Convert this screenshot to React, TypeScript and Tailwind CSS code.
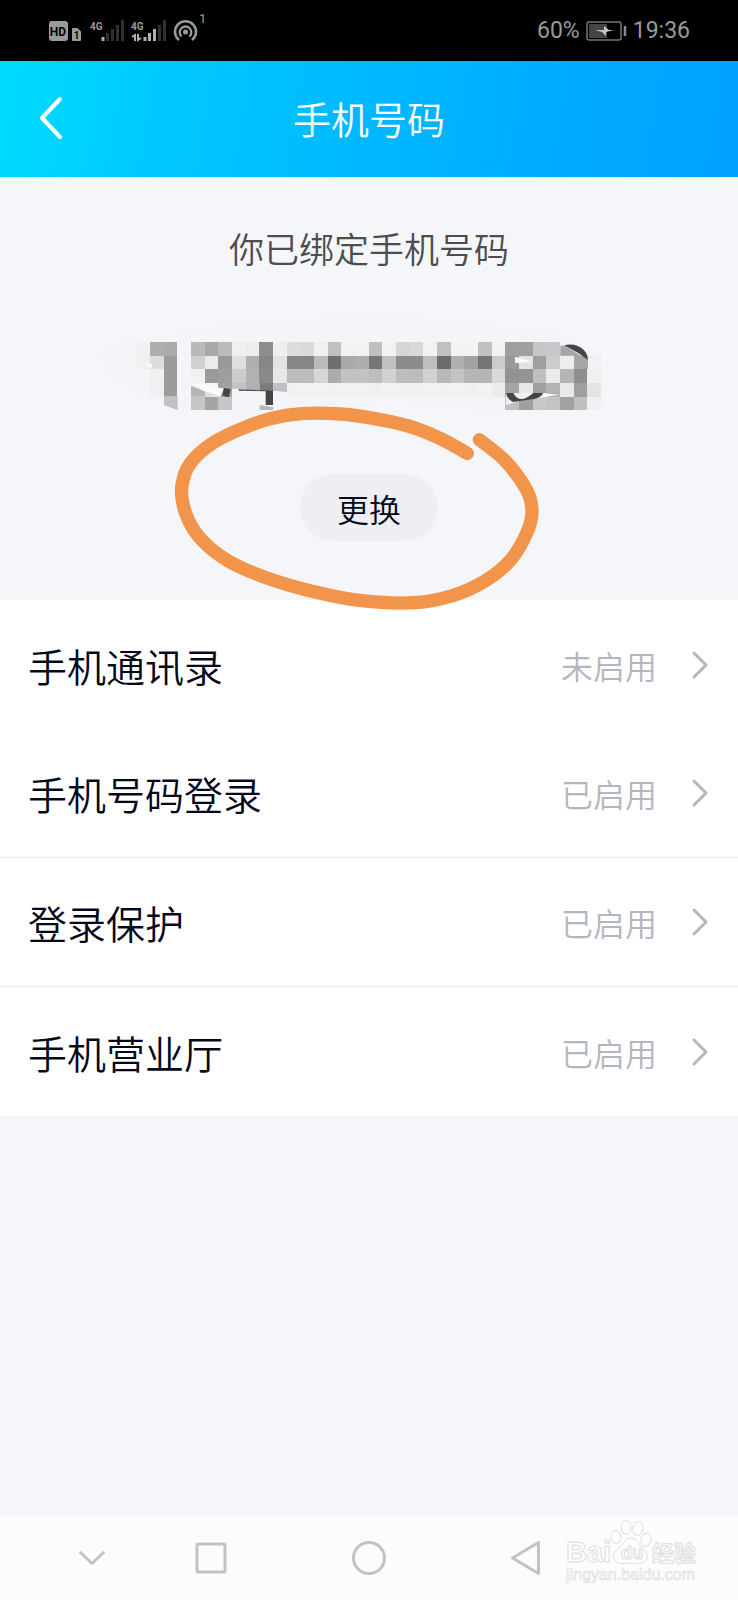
import clsx from 'clsx'

interface SettingItem {
  label: string
  status: string
  divider?: boolean
}

type Point = [number, number]

const items: SettingItem[] = [
  { label: '手机通讯录', status: '未启用' },
  { label: '手机号码登录', status: '已启用', divider: true },
  { label: '登录保护', status: '已启用', divider: true },
  { label: '手机营业厅', status: '已启用' },
]

// Grey level of every mosaic tile, one row per line ('..' = empty)
const mosaic = [
  'f0 ae ab .. b9 a8 bb f0 ee 8e ef dd da f0 c0 f2 f2 c0 f2 d6 d9 f2 c0 f3 f3 c1 f2 9f a0 c6 c8 .. .. ..',
  'f0 dd 9c .. d0 eb 99 df af 86 e2 86 86 bb 6f a9 ae 76 c0 8b 8c be 6c b0 a2 75 cc 9a e2 9f cd ed a0 f2',
  '.. f0 9c .. f1 9a 9e cc b2 8a e8 bc bc d6 ac c2 c2 be d2 bd bc d2 b8 c4 b6 b6 d9 92 94 c0 eb b5 8f f0',
  '.. f0 9c .. .. .. a8 .. .. .. .. f1 f2 f2 f1 f2 f2 f1 f2 f1 f1 f2 f1 f2 f1 f2 ec a5 e8 9f b3 e9 9f e4',
  '.. .. .. .. c6 a5 c6 .. .. .. .. .. .. .. .. .. .. .. .. .. .. .. .. .. .. .. .. bf 9f c8 c4 a2 bf f0',
].map(row => row.split(' '))

const TILE = 41

const marker: Point[] = [
  [922, 190], [840, 145], [745, 108], [640, 85], [540, 72], [425, 71], [330, 86], [240, 118],
  [165, 155], [108, 200], [75, 250], [65, 315], [85, 390], [130, 455], [205, 513], [310, 560],
  [450, 602], [605, 632], [765, 638], [880, 616], [975, 573], [1050, 512], [1100, 430],
  [1116, 365], [1100, 300], [1035, 212], [958, 149],
]

// Catmull-Rom through the points, written as cubic beziers
function smoothPath(pts: Point[]): string {
  let d = `M${pts[0][0]} ${pts[0][1]}`
  for (let i = 0; i < pts.length - 1; i++) {
    const a = pts[i - 1] ?? pts[i]
    const b = pts[i]
    const c = pts[i + 1]
    const e = pts[i + 2] ?? c
    d += `C${b[0] + (c[0] - a[0]) / 6} ${b[1] + (c[1] - a[1]) / 6} ${c[0] - (e[0] - b[0]) / 6} ${c[1] - (e[1] - b[1]) / 6} ${c[0]} ${c[1]}`
  }
  return d
}

function StatusBar() {
  return (
    <div className="flex h-[61px] items-center bg-black px-12 text-[#9a9a9a]">
      <svg width="120" height="62" viewBox="48 0 120 62" fill="none" aria-label="信号">
        <rect x="49" y="21" width="19" height="20" rx="3" fill="#9a9a9a" />
        <text x="58" y="36" textAnchor="middle" fontSize="12" fontWeight="700" fill="#000" fontFamily="Roboto">HD</text>
        <path d="M73 29h4l3 3v8h-7z" fill="#9a9a9a" stroke="#9a9a9a" strokeWidth="2" strokeLinejoin="round" />
        <text x="76.500" y="39" textAnchor="middle" fontSize="10" fontWeight="700" fill="#000" fontFamily="Roboto">1</text>
        <text x="90" y="30" fontSize="10" fontWeight="700" fill="#9a9a9a" fontFamily="Roboto">4G</text>
        <path d="M103 37v4" stroke="#b0b0b0" strokeWidth="3" />
        <path d="M107.500 33v8M112.500 29v12M117.500 25v16M122.500 20v21" stroke="#303030" strokeWidth="3" />
        <text x="131" y="30" fontSize="10" fontWeight="700" fill="#9a9a9a" fontFamily="Roboto">4G</text>
        <path d="M135 41v-6l-3 2M138 34v6l3-2" stroke="#b0b0b0" strokeWidth="2" />
        <path d="M145 37v4M149.500 33v8M154.500 29v12" stroke="#b0b0b0" strokeWidth="3" />
        <path d="M159.500 25v16M164.500 20v21" stroke="#303030" strokeWidth="3" />
      </svg>
      <svg width="38" height="62" viewBox="168 0 38 62" className="mr-auto" fill="none" aria-label="热点">
        <path d="M179 40a10.500 10.500 0 1 1 13 0" stroke="#9a9a9a" strokeWidth="2.500" />
        <path d="M181.500 36.500a5.800 5.800 0 1 1 8 0" stroke="#9a9a9a" strokeWidth="2.300" />
        <circle cx="185.500" cy="32" r="2.500" fill="#9a9a9a" />
        <text x="199" y="23" fontSize="13" fontWeight="400" fill="#9a9a9a" fontFamily="Roboto">1</text>
      </svg>
      <div className="flex items-center gap-[6px] font-[Roboto] text-[23px] leading-8 font-normal">
        <span>60%</span>
        <svg width="41" height="20" viewBox="0 0 41 20" fill="none" aria-label="充电中">
          <rect x="1" y="1" width="34" height="18" rx="2" stroke="#777" strokeWidth="1.500" />
          <rect x="3" y="3" width="18" height="14" fill="#444" />
          <path d="M9 9l9 0 0-4 5 4h5l-8 2v4l-4-4z" fill="#c4c4c4" />
          <path d="M39 5v10" stroke="#888" strokeWidth="2.500" />
        </svg>
        <span>19:36</span>
      </div>
    </div>
  )
}

function MaskedNumber() {
  return (
    <svg
      width="558"
      height="108"
      viewBox="0 0 1674 324"
      className="max-w-full"
      role="img"
      aria-label="已隐藏的手机号码"
    >
      {/* faint brush smear behind the tiles */}
      <path
        d="M30 130Q50 92 180 88L420 36 900 12 1400 66 1533 140 1540 280 1300 320 900 270 520 324 400 324 222 285Q40 220 30 130z"
        fill="#f3f5f9"
      />
      <g transform="translate(139 96)" shapeRendering="crispEdges">
        {mosaic.map((row, y) =>
          row.map((g, x) =>
            g === '..' ? null : (
              <rect key={`${x}-${y}`} x={x * TILE} y={y * TILE} width={TILE} height={TILE} fill={`#${g}${g}${g}`} />
            )
          )
        )}
      </g>
      {/* left side, where the brush missed the digits */}
      <path d="M221 260h42v42h-42z" fill="#f4f6fa" />
      <path d="M222 260h41v40l-41-15z" fill="#c2c2c4" />
      <path d="M303 227l42 17v16h-42z" fill="#b5b5b5" />
      <path d="M345 236l48 4v20h-48z" fill="#dedee0" />
      <path d="M303 219l98 16-10 24-50-16z" fill="#fafafa" />
      <path d="M386 219h40v18l-40-3z" fill="#a2a2a2" />
      <path d="M426 219h42v19l-42-2z" fill="#c2c2c4" />
      <path d="M468 219h41v24l-41-3z" fill="#b0b0b0" />
      <path d="M509 219h41v24h-41z" fill="#7c7c7c" />
      <path d="M550 219h41v27l-41-4z" fill="#c0c0c3" />
      <path d="M402 234l20 3-5 25-20-5z" fill="#454545" />
      <path d="M446 238l103 4v43h-22v-41l-81-2z" fill="#454545" />
      <path d="M509 285l41 7v8h-41z" fill="#b8b8ba" />
      <path d="M162 160l24 3v11z" fill="#fdfdfe" />

      {/* right side */}
      <g transform="translate(780 0)">
        <path d="M590 96h24l58 41h-82z" fill="#c8c8cb" />
        <path d="M632 106l13 2 69 42v27h-42v-40h-40z" fill="#a6a6a8" />
        <path d="M642 106q35-8 57 12 15 14 15 32l-28-20z" fill="#454545" />
        <path d="M495 140l50 14-34 5h-16z" fill="#fbfbfb" />
        <path d="M468 249h123v12l-82 12-41 12z" fill="#eeeff2" />
        <path d="M468 249h22q18 36 60 0h29q-4 12-25 18l-65 9q-18-9-21-27z" fill="#454545" />
        <path d="M579 250l48 4-48 8z" fill="#fbfbfb" />
      </g>
    </svg>
  )
}

function MarkerCircle() {
  return (
    <svg
      width="400"
      height="230"
      viewBox="0 0 1200 690"
      className="pointer-events-none absolute left-1/2 top-[213px] z-10 -translate-x-[209px]"
      fill="none"
      stroke="#f2944a"
      strokeWidth="40"
      strokeLinecap="round"
      strokeLinejoin="round"
      aria-hidden="true"
    >
      <path d={smoothPath(marker)} />
    </svg>
  )
}

function Watermark() {
  return (
    <svg
      width="136"
      height="66"
      viewBox="0 0 136 66"
      className="absolute bottom-[14px] right-[37px]"
      fill="#fdfdfd"
      stroke="#dedede"
      aria-label="百度经验"
    >
      <text x="1" y="42" fontSize="29" fontWeight="700" fontFamily="Liberation Sans">Bai</text>
      <ellipse cx="51" cy="17" rx="5" ry="6.500" transform="rotate(-12 51 17)" />
      <ellipse cx="61" cy="7.500" rx="5" ry="7" />
      <ellipse cx="73" cy="8.500" rx="5" ry="7" transform="rotate(10 73 8.500)" />
      <ellipse cx="81" cy="20" rx="5" ry="6.500" transform="rotate(14 81 20)" />
      <path d="M66 18c-6 0-8 7-12 10-4 3-7 7-5 11 2 5 7 5 17 4 10 1 14 1 16-4 2-4-1-8-5-11-4-3-5-10-11-10z" />
      <text x="56" y="39" fontSize="18" fontWeight="700" fontFamily="Liberation Sans">du</text>
      <text x="87" y="41" fontSize="22" fontWeight="700" fontFamily="Noto Sans CJK SC">经验</text>
      <text x="1" y="60" fontSize="16" fontWeight="400" strokeWidth="0.700" fontFamily="Liberation Sans">jingyan.baidu.com</text>
    </svg>
  )
}

function NavBar() {
  return (
    <nav className="relative mt-auto grid h-[84px] grid-cols-[120fr_118fr_198fr_116fr_122fr] place-items-center bg-[#fcfcfc] px-8">
      <button aria-label="收起">
        <svg width="30" height="34" viewBox="0 0 30 34" fill="none" stroke="#c2c2c2" strokeWidth="3" strokeLinecap="round" strokeLinejoin="round">
          <path d="M3.500 11.500L15 22.500l11.500-11" />
        </svg>
      </button>
      <button aria-label="最近任务">
        <svg width="34" height="34" viewBox="0 0 34 34" fill="none" stroke="#c2c2c2" strokeWidth="3">
          <rect x="3" y="3" width="28" height="28" rx="1.500" />
        </svg>
      </button>
      <button aria-label="主屏幕">
        <svg width="36" height="36" viewBox="0 0 36 36" fill="none" stroke="#c2c2c2" strokeWidth="3">
          <circle cx="18" cy="18" r="15.500" />
        </svg>
      </button>
      <button aria-label="返回">
        <svg width="32" height="36" viewBox="0 0 32 36" fill="none" stroke="#c2c2c2" strokeWidth="3" strokeLinejoin="round">
          <path d="M28.500 2.500v31L2.500 18z" />
        </svg>
      </button>
      <Watermark />
    </nav>
  )
}

export default function App() {
  return (
    <div className="flex min-h-screen flex-col bg-[#f4f6fa] font-['Noto_Sans_CJK_SC',sans-serif] font-[350]">
      <StatusBar />

      {/* Header */}
      <header className="grid h-[116px] grid-cols-[1fr_auto_1fr] items-center bg-linear-[100deg,#00dcff_0%,#00c6ff_25%,#00b0ff_65%,#00a0ff_100%] px-8 text-white">
        <button aria-label="返回" className="justify-self-start">
          <svg width="38" height="50" viewBox="0 0 38 50" fill="none" stroke="currentColor" strokeWidth="4" strokeLinecap="round" strokeLinejoin="round">
            <path d="M28 5L10 24l18 19" />
          </svg>
        </button>
        <h1 className="pb-0.5 text-[38px] leading-[48px]">手机号码</h1>
      </header>

      {/* Bound number */}
      <section className="relative flex flex-col items-center pt-[47px] pb-[59px]">
        <p className="text-[35px] leading-[48px] text-[#4d4d4d]">你已绑定手机号码</p>
        <div className="mt-[38px]">
          <MaskedNumber />
        </div>
        <button className="mt-14 h-[67px] rounded-full bg-[#eeeff4] px-[37px] text-[32px] text-[#03081a]">
          更换
        </button>
        <MarkerCircle />
      </section>

      {/* Settings */}
      <ul className="bg-white">
        {items.map(item => (
          <li key={item.label} className={clsx(item.divider && 'border-b border-[#ebecef]')}>
            <button
              className={clsx(
                'flex w-full items-center pl-[28px] pr-[29px] text-left',
                item.divider ? 'h-32' : 'h-[129px]'
              )}
            >
              <span className="text-[39px] leading-[56px] text-[#03081a]">{item.label}</span>
              <span className="ml-auto text-[32px] leading-[56px] text-[#b4b6bf]">{item.status}</span>
              <svg width="20" height="30" viewBox="0 0 20 30" className="ml-8" fill="none" stroke="#b4b6c0" strokeWidth="3" strokeLinecap="round" strokeLinejoin="round">
                <path d="M5 3l12 12L5 27" />
              </svg>
            </button>
          </li>
        ))}
      </ul>

      <NavBar />
    </div>
  )
}
